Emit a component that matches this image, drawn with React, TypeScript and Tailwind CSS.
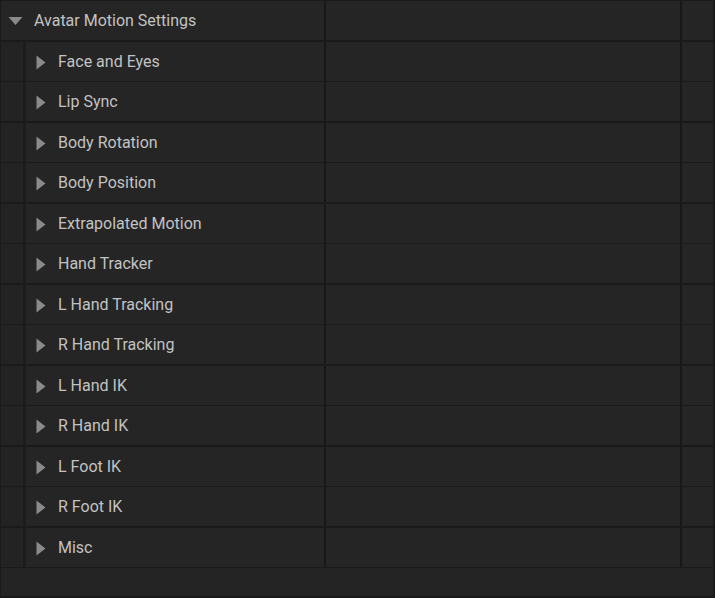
const sections = [
  'Face and Eyes',
  'Lip Sync',
  'Body Rotation',
  'Body Position',
  'Extrapolated Motion',
  'Hand Tracker',
  'L Hand Tracking',
  'R Hand Tracking',
  'L Hand IK',
  'R Hand IK',
  'L Foot IK',
  'R Foot IK',
  'Misc',
];

function CaretDown() {
  return (
    <svg width="15" height="10" viewBox="0 0 15 10" className="shrink-0">
      <path d="M0.5 1 L14.5 1 L7.5 9 Z" fill="#8a8a8a" />
    </svg>
  );
}

function CaretRight() {
  return (
    <svg width="10" height="15" viewBox="0 0 10 15" className="shrink-0">
      <path d="M0.5 0.5 L9.5 7.5 L0.5 14.5 Z" fill="#8a8a8a" />
    </svg>
  );
}

// trailing columns shared by header and child rows
function ValueColumns() {
  return (
    <>
      <div className="w-[2px] shrink-0 bg-[#181818]" />
      <div className="w-[354px] shrink-0 bg-[#252525]" />
      <div className="w-[2px] shrink-0 bg-[#181818]" />
      <div className="w-[31px] shrink-0 bg-[#252525]" />
    </>
  );
}

export default function App() {
  return (
    <div
      className="w-[715px] h-[598px] bg-[#1a1a1a] pt-[1px] pl-[1px] pr-[2px] flex flex-col text-[16px] text-[#c2c2c2]"
      style={{ fontFamily: 'Roboto, "Liberation Sans", sans-serif' }}
    >
      {/* header */}
      <div className="h-[39px] flex shrink-0">
        <div className="w-[323px] shrink-0 bg-[#252525] flex items-center pl-[7px] gap-[11px]">
          <CaretDown />
          <span>Avatar Motion Settings</span>
        </div>
        <ValueColumns />
      </div>

      {sections.map((name, i) => (
        <div
          key={name}
          className={`h-[39px] flex shrink-0 ${i % 2 === 0 ? 'mt-[2px]' : 'mt-[1px]'}`}
        >
          <div className="w-[22px] shrink-0 bg-[#232323]" />
          <div className="w-[3px] shrink-0 bg-[#1c1c1c]" />
          <div className="w-[298px] shrink-0 bg-[#252525] flex items-center pl-[10px] pt-[1px] gap-[12px]">
            <CaretRight />
            <span>{name}</span>
          </div>
          <ValueColumns />
        </div>
      ))}

      {/* empty footer strip */}
      <div className="mt-[1px] h-[28px] bg-[#242424] shrink-0" />
    </div>
  );
}
